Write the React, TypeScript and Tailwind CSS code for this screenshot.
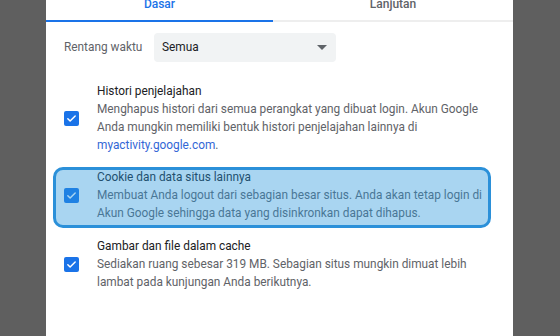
import React from "react";

function Check() {
  return (
    <div className="w-[15px] h-[15px] shrink-0 rounded-[2px] bg-[#1a73e8] flex items-center justify-center">
      <svg width="11" height="11" viewBox="0 0 24 24" fill="none">
        <path d="M4 12.5l5 5L20 6.5" stroke="white" strokeWidth="3.2" strokeLinecap="round" strokeLinejoin="round" />
      </svg>
    </div>
  );
}

function Item({ title, lines }: { title: string; lines: React.ReactNode[] }) {
  return (
    <div className="flex items-center gap-[18px]">
      <Check />
      <div className="flex-1 text-[11.85px] leading-[18px] whitespace-nowrap">
        <p className="text-[#202124]">{title}</p>
        {lines.map((l, i) => (
          <p key={i} className="text-[#5f6368]">{l}</p>
        ))}
      </div>
    </div>
  );
}

export default function App() {
  return (
    <div
      className="w-[560px] h-[336px] bg-[#5f5f5f] overflow-hidden"
      style={{ fontFamily: "Roboto, 'Noto Sans', sans-serif" }}
    >
      <div className="ml-[46px] w-[467px] h-full bg-white overflow-hidden">
        {/* Tabs */}
        <div className="flex -mt-[12px] text-[12px] font-medium">
          <div className="w-[227px] h-[34px] flex items-center justify-center border-b-2 border-[#1a73e8] text-[#1a73e8]">
            Dasar
          </div>
          <div className="flex-1 h-[34px] flex items-center justify-center border-b-2 border-[#eeeeee] text-[#5f6368]">
            Lanjutan
          </div>
        </div>

        <div className="px-[18px]">
          {/* Time range */}
          <div className="flex items-center mt-[11px]">
            <span className="w-[90px] text-[11.85px] text-[#5f6368]">Rentang waktu</span>
            <div className="w-[182px] h-[29px] rounded-[4px] bg-[#f1f3f4] flex items-center justify-between pl-[8px] pr-[9px]">
              <span className="text-[11.85px] text-[#202124]">Semua</span>
              <svg width="10" height="5" viewBox="0 0 10 5">
                <path d="M0 0h10L5 5z" fill="#5f6368" />
              </svg>
            </div>
          </div>

          <div className="mt-[20px]">
            <Item
              title="Histori penjelajahan"
              lines={[
                "Menghapus histori dari semua perangkat yang dibuat login. Akun Google",
                "Anda mungkin memiliki bentuk histori penjelajahan lainnya di",
                <>
                  <span className="text-[#3367d6]">myactivity.google.com</span>.
                </>,
              ]}
            />
          </div>

          <div className="relative mt-[14px]">
            <Item
              title="Cookie dan data situs lainnya"
              lines={[
                "Membuat Anda logout dari sebagian besar situs. Anda akan tetap login di",
                "Akun Google sehingga data yang disinkronkan dapat dihapus.",
              ]}
            />
            <div className="absolute -left-[11px] right-[4px] -top-[1px] -bottom-[6px] rounded-[10px] border-[3px] border-[#2b90d9] bg-[#2996dc]/40" />
          </div>

          <div className="mt-[15px]">
            <Item
              title="Gambar dan file dalam cache"
              lines={[
                "Sediakan ruang sebesar 319 MB. Sebagian situs mungkin dimuat lebih",
                "lambat pada kunjungan Anda berikutnya.",
              ]}
            />
          </div>
        </div>
      </div>
    </div>
  );
}
